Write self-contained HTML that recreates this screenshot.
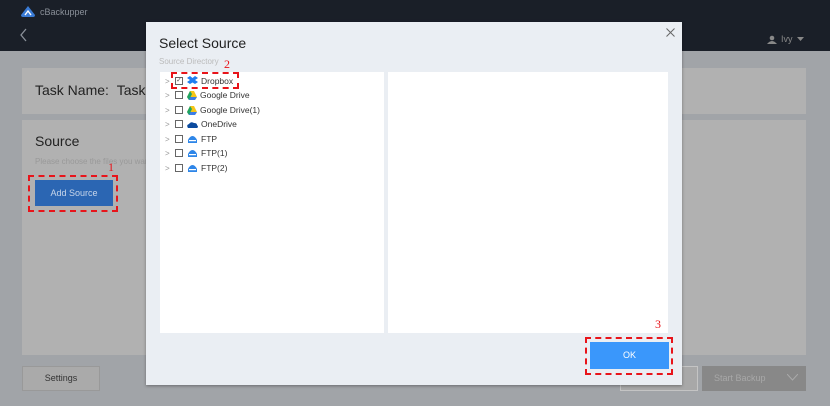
<!DOCTYPE html>
<html><head><meta charset="utf-8"><style>
*{margin:0;padding:0;box-sizing:border-box}
body{width:830px;height:406px;overflow:hidden;background:#a1a4a8;font-family:"Liberation Sans",Arial,sans-serif;position:relative}
.abs{position:absolute}
.hdr{left:0;top:0;width:830px;height:51px;background:#1a1f28}
.panel{background:#b1b1b1}
.dlg{left:146px;top:22px;width:536px;height:363px;background:#eaeef3;box-shadow:0 1px 3px rgba(0,0,0,.35)}
.row{position:absolute;left:0;height:14px;font-size:8.5px;color:#333;display:flex;align-items:center}
.row .ar{width:7px;color:#999;font-size:8px;margin-left:5px}
.row .cb{width:8px;height:8px;border:1px solid #666;background:#fff;margin-left:3px;margin-right:4px;font-size:7px;line-height:6px;text-align:center;color:#555}
.row svg{margin-right:3px}
.dash{border:2px dashed #e8141a}
.num{color:#e8141a;font-family:"Liberation Serif",serif;font-size:12px}
</style></head><body>
<div class="abs hdr"></div>
<svg class="abs" style="left:21px;top:6px" width="14" height="11" viewBox="0 0 14 11"><path d="M7 0L14 9Q14 11 12 11L2 11Q0 11 0 9Z" fill="#3a7bd5"/><path d="M4 9L7 5L10 9" stroke="#fff" stroke-width="1.4" fill="none"/></svg>
<div class="abs" style="left:40px;top:7px;font-size:9px;color:#8a9099">cBackupper</div>
<svg class="abs" style="left:20px;top:28px" width="8" height="14"><path d="M6 1L1 7L6 13" stroke="#8a9099" fill="none" stroke-width="1.3"/></svg>
<svg class="abs" style="left:767px;top:35px" width="10" height="9"><circle cx="5" cy="3" r="2.3" fill="#888"/><path d="M0 9Q5 3 10 9Z" fill="#888"/></svg>
<div class="abs" style="left:781px;top:34px;font-size:9px;color:#888">Ivy</div>
<svg class="abs" style="left:797px;top:37px" width="7" height="4"><path d="M0 0L7 0L3.5 4Z" fill="#888"/></svg>

<div class="abs panel" style="left:22px;top:68px;width:784px;height:46px"></div>
<div class="abs" style="left:35px;top:82px;font-size:14px;color:#222">Task Name:&nbsp;&nbsp;Task</div>
<div class="abs panel" style="left:22px;top:120px;width:784px;height:235px"></div>
<div class="abs" style="left:35px;top:133px;font-size:14px;color:#222">Source</div>
<div class="abs" style="left:35px;top:157px;font-size:8px;color:#999">Please choose the files you want</div>
<div class="abs" style="left:35px;top:180px;width:78px;height:26px;background:#2b66b3;color:#c8d6ea;font-size:9px;text-align:center;line-height:26px">Add Source</div>
<div class="abs dash" style="left:28px;top:175px;width:90px;height:37px"></div>
<div class="abs num" style="left:108px;top:160px">1</div>

<div class="abs" style="left:22px;top:366px;width:78px;height:25px;background:#aaa;border:1px solid #999;font-size:9px;color:#333;text-align:center;line-height:23px">Settings</div>
<div class="abs" style="left:620px;top:366px;width:78px;height:25px;border:1px solid #c4c4c4;background:#a8a8a8"></div>
<div class="abs" style="left:702px;top:366px;width:104px;height:25px;background:#888;color:#a8a8a8;font-size:9px;line-height:25px;padding-left:12px">Start Backup</div>
<svg class="abs" style="left:787px;top:374px" width="11" height="7"><path d="M0 0L5.5 6L11 0" stroke="#aaa" fill="none"/></svg>

<div class="abs dlg">
  <div class="abs" style="left:13px;top:13px;font-size:14px;color:#222">Select Source</div>
  <svg class="abs" style="left:520px;top:6px" width="9" height="9"><path d="M0.5 0.5L8.5 8.5M8.5 0.5L0.5 8.5" stroke="#666" stroke-width="1"/></svg>
  <div class="abs" style="left:13px;top:35px;font-size:8px;color:#bbb">Source Directory</div>
  <div class="abs" style="left:14px;top:50px;width:224px;height:261px;background:#fff">
    <div class="row" style="top:2px"><span class="ar">&gt;</span><span class="cb">✓</span><svg width="11" height="10" viewBox="0 0 11 10"><path d="M3 0L0 2L3 4L0 6L3 8L5.5 6.5L8 8L11 6L8 4L11 2L8 0L5.5 2Z" fill="#1f7ef0"/></svg>Dropbox</div>
    <div class="row" style="top:16px"><span class="ar">&gt;</span><span class="cb"></span><svg width="10" height="9"><path d="M3 0L7 0L10 6L8 9L2 9L0 6Z" fill="#f5c518"/><path d="M0 6L2 9L8 9L10 6Z" fill="#3b7de8"/><path d="M3 0L0 6L2 9L5 3Z" fill="#1fa463"/></svg>Google Drive</div>
    <div class="row" style="top:31px"><span class="ar">&gt;</span><span class="cb"></span><svg width="10" height="9"><path d="M3 0L7 0L10 6L8 9L2 9L0 6Z" fill="#f5c518"/><path d="M0 6L2 9L8 9L10 6Z" fill="#3b7de8"/><path d="M3 0L0 6L2 9L5 3Z" fill="#1fa463"/></svg>Google Drive(1)</div>
    <div class="row" style="top:45px"><span class="ar">&gt;</span><span class="cb"></span><svg width="11" height="7"><path d="M1 7Q-1 4 2 3Q4 0 7 2Q10 2 10 4Q12 6 10 7Z" fill="#0b4a9e"/></svg>OneDrive</div>
    <div class="row" style="top:60px"><span class="ar">&gt;</span><span class="cb"></span><svg width="11" height="7"><path d="M1 7L1 4Q3 0 5.5 0Q8 0 10 4L10 7Z" fill="#2e86e8"/><rect x="2" y="4" width="7" height="1.2" fill="#fff"/></svg>FTP</div>
    <div class="row" style="top:74px"><span class="ar">&gt;</span><span class="cb"></span><svg width="11" height="7"><path d="M1 7L1 4Q3 0 5.5 0Q8 0 10 4L10 7Z" fill="#2e86e8"/><rect x="2" y="4" width="7" height="1.2" fill="#fff"/></svg>FTP(1)</div>
    <div class="row" style="top:89px"><span class="ar">&gt;</span><span class="cb"></span><svg width="11" height="7"><path d="M1 7L1 4Q3 0 5.5 0Q8 0 10 4L10 7Z" fill="#2e86e8"/><rect x="2" y="4" width="7" height="1.2" fill="#fff"/></svg>FTP(2)</div>
  </div>
  <div class="abs dash" style="left:25px;top:50px;width:68px;height:17px"></div>
  <div class="abs num" style="left:78px;top:35px">2</div>
  <div class="abs" style="left:242px;top:50px;width:280px;height:261px;background:#fff"></div>
  <div class="abs num" style="left:509px;top:295px">3</div>
  <div class="abs dash" style="left:439px;top:315px;width:88px;height:38px"></div>
  <div class="abs" style="left:444px;top:320px;width:79px;height:27px;background:#3a97fb;color:#fff;font-size:9px;text-align:center;line-height:27px">OK</div>
</div>
</body></html>
